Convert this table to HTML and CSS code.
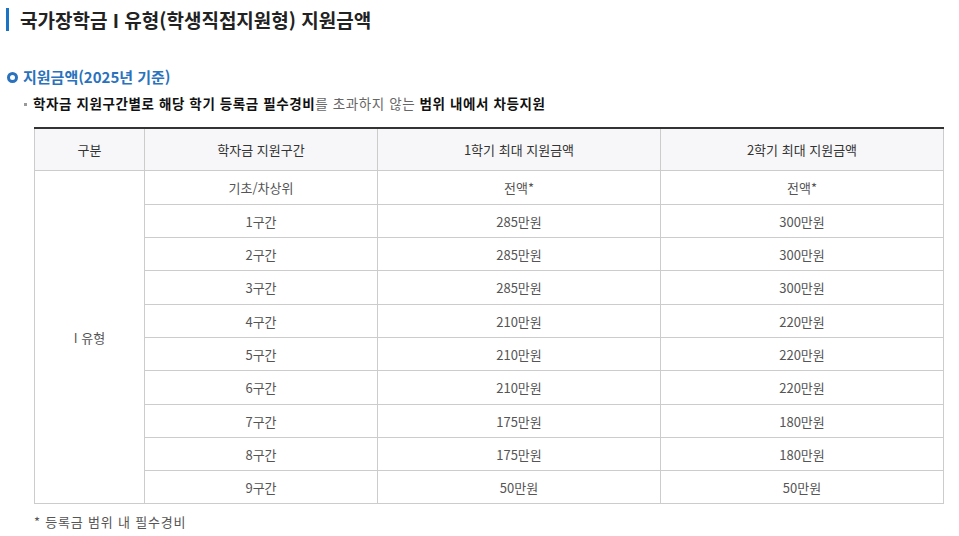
FILE: index.html
```html
<!DOCTYPE html>
<html lang="ko">
<head>
<meta charset="utf-8">
<link rel="stylesheet" href="styles.css">
</head>
<body>
<div class="page">
  <h1 class="title">국가장학금 I 유형(학생직접지원형) 지원금액</h1>
  <h2 class="section"><span class="ring"></span><span>지원금액(2025년 기준)</span></h2>
  <p class="bullet"><span class="sq"></span><span><b>학자금 지원구간별로 해당 학기 등록금 필수경비</b>를 초과하지 않는 <b>범위 내에서 차등지원</b></span></p>
  <table class="grid">
    <colgroup>
      <col class="c1"><col class="c2"><col class="c3"><col class="c4">
    </colgroup>
    <thead>
      <tr><th>구분</th><th>학자금 지원구간</th><th>1학기 최대 지원금액</th><th>2학기 최대 지원금액</th></tr>
    </thead>
    <tbody>
      <tr><td rowspan="10">I 유형</td><td>기초/차상위</td><td>전액*</td><td>전액*</td></tr>
      <tr><td>1구간</td><td>285만원</td><td>300만원</td></tr>
      <tr><td>2구간</td><td>285만원</td><td>300만원</td></tr>
      <tr><td>3구간</td><td>285만원</td><td>300만원</td></tr>
      <tr><td>4구간</td><td>210만원</td><td>220만원</td></tr>
      <tr><td>5구간</td><td>210만원</td><td>220만원</td></tr>
      <tr><td>6구간</td><td>210만원</td><td>220만원</td></tr>
      <tr><td>7구간</td><td>175만원</td><td>180만원</td></tr>
      <tr><td>8구간</td><td>175만원</td><td>180만원</td></tr>
      <tr><td>9구간</td><td>50만원</td><td>50만원</td></tr>
    </tbody>
  </table>
  <p class="note">* 등록금 범위 내 필수경비</p>
</div>
</body>
</html>
```
FILE: styles.css
```css
html, body {
  margin: 0;
  padding: 0;
  background: #fff;
}
body {
  font-family: "Malgun Gothic", "Noto Sans CJK KR", "Noto Sans", sans-serif;
  color: #555;
  font-size: 13px;
}
.page {
  padding: 8px 16px 0 6px;
}
.title {
  margin: 0;
  border-left: 3px solid #1a73c4;
  padding-left: 11px;
  font-size: 19px;
  line-height: 23px;
  font-weight: bold;
  color: #222;
  letter-spacing: 0;
}
.section {
  display: flex;
  align-items: center;
  margin: 36px 0 0 1px;
  font-size: 15px;
  line-height: 20px;
  font-weight: bold;
  color: #2a72bd;
  letter-spacing: 0;
}
.ring {
  width: 5px;
  height: 5px;
  border: 3px solid #2a72bd;
  border-radius: 50%;
  margin-right: 5px;
}
.bullet {
  display: flex;
  align-items: center;
  margin: 7px 0 0 18px;
  font-size: 13.5px;
  line-height: 18px;
  letter-spacing: 0.6px;
  color: #666;
}
.bullet b {
  color: #111;
}
.sq {
  width: 3px;
  height: 3px;
  background: #999;
  margin-right: 6px;
  margin-top: 2px;
}
.grid {
  margin: 15px 0 0 28px;
  width: 910px;
  border-collapse: collapse;
  border-top: 2px solid #333;
  table-layout: fixed;
  font-size: 13px;
}
.c1 { width: 110px; }
.c2 { width: 233px; }
.c3 { width: 283px; }
.c4 { width: 283px; }
.grid th, .grid td {
  border: 1px solid #ccc;
  text-align: center;
  padding: 0;
}
.grid th {
  background: #f7f7f9;
  height: 41px;
  color: #333;
  font-weight: normal;
}
.grid td {
  height: 32px;
  color: #555;
}
.grid tbody tr:nth-child(3n+1):not(:last-child) td {
  height: 33px;
}
.note {
  margin: 9px 0 0 28px;
  font-size: 13px;
  line-height: 18px;
  letter-spacing: 0.8px;
  color: #555;
}
```
